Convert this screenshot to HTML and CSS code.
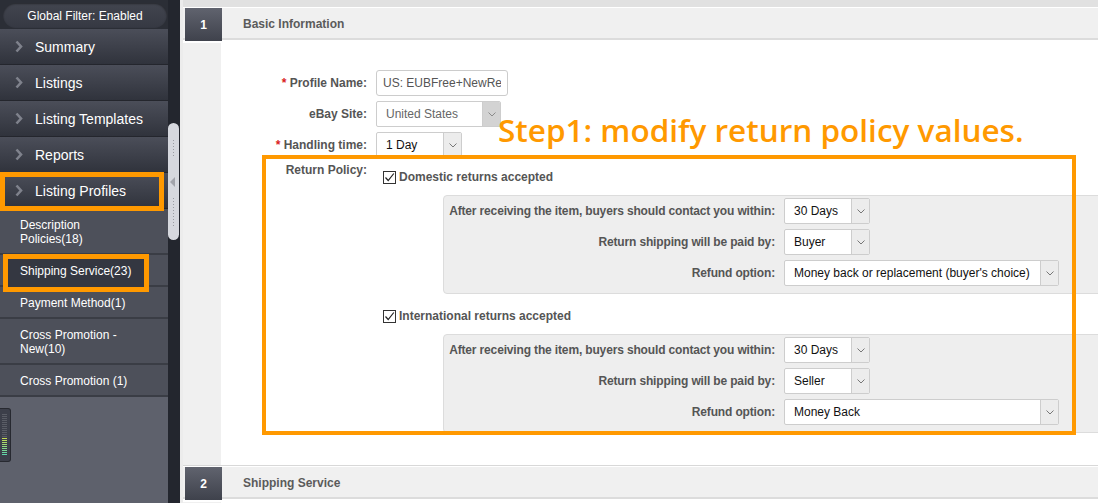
FILE: index.html
```html
<!DOCTYPE html>
<html lang="en">
<head>
<meta charset="utf-8">
<title>Listing Profiles</title>
<link rel="stylesheet" href="styles.css">
</head>
<body>
<aside class="sidebar">
  <div class="filter"><span class="pill">Global Filter: Enabled</span></div>
  <nav class="menu">
    <a class="menu-item"><svg class="chev" width="8" height="13" viewBox="0 0 8 13"><path d="M1.5 1.5 L6 6.5 L1.5 11.5" fill="none" stroke="#7f828c" stroke-width="2.6"/></svg>Summary</a>
    <a class="menu-item"><svg class="chev" width="8" height="13" viewBox="0 0 8 13"><path d="M1.5 1.5 L6 6.5 L1.5 11.5" fill="none" stroke="#7f828c" stroke-width="2.6"/></svg>Listings</a>
    <a class="menu-item"><svg class="chev" width="8" height="13" viewBox="0 0 8 13"><path d="M1.5 1.5 L6 6.5 L1.5 11.5" fill="none" stroke="#7f828c" stroke-width="2.6"/></svg>Listing Templates</a>
    <a class="menu-item"><svg class="chev" width="8" height="13" viewBox="0 0 8 13"><path d="M1.5 1.5 L6 6.5 L1.5 11.5" fill="none" stroke="#7f828c" stroke-width="2.6"/></svg>Reports</a>
    <a class="menu-item is-marked"><svg class="chev" width="8" height="13" viewBox="0 0 8 13"><path d="M1.5 1.5 L6 6.5 L1.5 11.5" fill="none" stroke="#7f828c" stroke-width="2.6"/></svg>Listing Profiles</a>
  </nav>
  <ul class="submenu">
    <li class="sub-item">Description Policies(18)</li>
    <li class="sub-item is-current"><span class="sub-text">Shipping Service(23)</span></li>
    <li class="sub-item">Payment Method(1)</li>
    <li class="sub-item">Cross Promotion - New(10)</li>
    <li class="sub-item">Cross Promotion (1)</li>
  </ul>
  <div class="side-grip"><span class="grip-bars"></span></div>
</aside>

<div class="splitter">
  <div class="splitter-handle">
    <span class="dots"></span>
    <span class="tri"></span>
    <span class="dots dots-long"></span>
  </div>
</div>

<main class="main">
  <div class="topbar"></div>

  <section class="step">
    <header class="step-head"><span class="step-num">1</span><h2 class="step-title">Basic Information</h2></header>
    <div class="step-body">
      <div class="step-gutter"></div>
      <div class="step-content">
        <div class="form">
          <label class="form-label"><span class="req">*</span> Profile Name:</label>
          <div class="field"><input class="text-input" type="text" value="US: EUBFree+NewReturnPolicy"></div>

          <label class="form-label">eBay Site:</label>
          <div class="field"><div class="select is-disabled w125"><span class="select-value">United States</span><span class="select-arrow"><svg width="8" height="5" viewBox="0 0 8 5"><path d="M0.5 0.5 L4 4 L7.5 0.5" fill="none" stroke="#8a8a8a" stroke-width="1"/></svg></span></div></div>

          <label class="form-label"><span class="req">*</span> Handling time:</label>
          <div class="field"><div class="select w86"><span class="select-value">1 Day</span><span class="select-arrow"><svg width="8" height="5" viewBox="0 0 8 5"><path d="M0.5 0.5 L4 4 L7.5 0.5" fill="none" stroke="#777" stroke-width="1"/></svg></span></div></div>

          <label class="form-label label-top">Return Policy:</label>
          <div class="policy">
            <div class="check"><span class="checkbox"><svg width="11" height="11" viewBox="0 0 11 11"><path d="M1.5 5.5 L4.2 8.5 L9.8 1.5" fill="none" stroke="#222" stroke-width="1.2"/></svg></span>Domestic returns accepted</div>
            <div class="policy-box">
              <span class="box-label">After receiving the item, buyers should contact you within:</span>
              <div class="select w86"><span class="select-value">30 Days</span><span class="select-arrow"><svg width="8" height="5" viewBox="0 0 8 5"><path d="M0.5 0.5 L4 4 L7.5 0.5" fill="none" stroke="#777" stroke-width="1"/></svg></span></div>
              <span class="box-label">Return shipping will be paid by:</span>
              <div class="select w86"><span class="select-value">Buyer</span><span class="select-arrow"><svg width="8" height="5" viewBox="0 0 8 5"><path d="M0.5 0.5 L4 4 L7.5 0.5" fill="none" stroke="#777" stroke-width="1"/></svg></span></div>
              <span class="box-label">Refund option:</span>
              <div class="select w275"><span class="select-value">Money back or replacement (buyer's choice)</span><span class="select-arrow"><svg width="8" height="5" viewBox="0 0 8 5"><path d="M0.5 0.5 L4 4 L7.5 0.5" fill="none" stroke="#777" stroke-width="1"/></svg></span></div>
            </div>

            <div class="check check-intl"><span class="checkbox"><svg width="11" height="11" viewBox="0 0 11 11"><path d="M1.5 5.5 L4.2 8.5 L9.8 1.5" fill="none" stroke="#222" stroke-width="1.2"/></svg></span>International returns accepted</div>
            <div class="policy-box policy-box-intl">
              <span class="box-label">After receiving the item, buyers should contact you within:</span>
              <div class="select w86"><span class="select-value">30 Days</span><span class="select-arrow"><svg width="8" height="5" viewBox="0 0 8 5"><path d="M0.5 0.5 L4 4 L7.5 0.5" fill="none" stroke="#777" stroke-width="1"/></svg></span></div>
              <span class="box-label">Return shipping will be paid by:</span>
              <div class="select w86"><span class="select-value">Seller</span><span class="select-arrow"><svg width="8" height="5" viewBox="0 0 8 5"><path d="M0.5 0.5 L4 4 L7.5 0.5" fill="none" stroke="#777" stroke-width="1"/></svg></span></div>
              <span class="box-label">Refund option:</span>
              <div class="select w275"><span class="select-value">Money Back</span><span class="select-arrow"><svg width="8" height="5" viewBox="0 0 8 5"><path d="M0.5 0.5 L4 4 L7.5 0.5" fill="none" stroke="#777" stroke-width="1"/></svg></span></div>
            </div>
          </div>
        </div>
      </div>
    </div>
  </section>

  <section class="step">
    <header class="step-head"><span class="step-num">2</span><h2 class="step-title">Shipping Service</h2></header>
    <div class="step-body step-body-collapsed">
      <div class="step-gutter"></div>
    </div>
  </section>

  <div class="callout-frame"></div>
  <p class="callout-text">Step1: modify return policy values.</p>
</main>
</body>
</html>
```

FILE: styles.css
```css
*, *::before, *::after { box-sizing: border-box; }
html, body { margin: 0; height: 100%; overflow: hidden; }
body {
  display: flex;
  font-family: "Liberation Sans", Arial, sans-serif;
  font-size: 12px;
  background: #fff;
}

/* ---------- sidebar ---------- */
.sidebar {
  width: 168px;
  flex: none;
  display: flex;
  flex-direction: column;
  background: #5e616c;
}
.filter {
  height: 29px;
  padding: 3px 1px 1px 3px;
  background: #2b2e36;
}
.pill {
  display: flex;
  align-items: center;
  justify-content: center;
  height: 25px;
  border-radius: 13px;
  background: linear-gradient(#42454f, #363943);
  box-shadow: inset 0 1px 2px rgba(0,0,0,.45);
  color: #fff;
  font-size: 12px;
}
.menu { display: flex; flex-direction: column; }
.menu-item {
  position: relative;
  display: flex;
  align-items: center;
  gap: 12px;
  height: 36px;
  padding-left: 15px;
  color: #fff;
  font-size: 14px;
  background: linear-gradient(#4b4e59, #30333c);
  border-bottom: 1px solid #24262d;
}
.chev { flex: none; }
.menu-item.is-marked::after {
  content: "";
  position: absolute;
  z-index: 3;
  left: 0;
  top: -1px;
  width: 164px;
  height: 39px;
  border: 5px solid #ff9900;
}
.submenu { list-style: none; margin: 0; padding: 0; }
.sub-item {
  position: relative;
  padding: 9px 23px 7px 20px;
  line-height: 14px;
  color: #fff;
  font-size: 12px;
  background: #4d505a;
  border-bottom: 2px solid #3a3d45;
}
.sub-item.is-current::before {
  content: "";
  position: absolute;
  z-index: 1;
  left: 3px;
  top: -1px;
  width: 146px;
  height: 38px;
  border: 5px solid #ff9900;
  background: #343741;
}
.sub-text { position: relative; z-index: 2; }
.side-grip {
  margin-top: 11px;
  width: 11px;
  height: 54px;
  padding: 5px 0 0 2px;
  background: #3c3f4a;
  border: 1px solid #272930;
  border-left: none;
  border-radius: 0 3px 3px 0;
}
.grip-bars {
  display: block;
  width: 5px;
  height: 42px;
  background:
    repeating-linear-gradient(#5a5d66 0 1px, transparent 1px 2px) top / 5px 24px no-repeat,
    repeating-linear-gradient(rgba(255,255,255,0) 0 1px, #3c3f4a 1px 2px) bottom / 5px 18px no-repeat,
    linear-gradient(#c8dc50, #55d6b4) bottom / 5px 18px no-repeat;
}

/* ---------- splitter ---------- */
.splitter {
  width: 12px;
  flex: none;
  display: flex;
  flex-direction: column;
  background: #23262e;
}
.splitter-handle {
  margin-top: 123px;
  width: 11px;
  height: 117px;
  display: flex;
  flex-direction: column;
  align-items: center;
  padding-top: 16px;
  background: #d6d8de;
  border-radius: 6px;
}
.dots {
  width: 4px;
  height: 19px;
  background-image: radial-gradient(circle, #9a9ca3 0.8px, transparent 1px);
  background-size: 3px 3px;
}
.dots-long { height: 30px; margin-top: 10px; }
.tri {
  margin-top: 19px;
  margin-left: -3px;
  width: 0;
  height: 0;
  border-top: 5px solid transparent;
  border-bottom: 5px solid transparent;
  border-right: 5px solid #a2a4ab;
}

/* ---------- main ---------- */
.main {
  flex: 1;
  position: relative;
  overflow: hidden;
  border-left: 3px solid #ececec;
}
.topbar { height: 7px; background: #e1e1e1; margin-left: -3px; }
.step-head {
  display: flex;
  align-items: center;
  height: 33px;
  background: #f0f0f0;
  border-top: 1px solid #fff;
  border-bottom: 2px solid #dcdcdc;
}
.step-num {
  align-self: flex-start;
  width: 37px;
  height: 33px;
  margin-left: 2px;
  margin-bottom: -3px;
  display: flex;
  align-items: center;
  justify-content: center;
  color: #fff;
  font-weight: bold;
  font-size: 12px;
  background: linear-gradient(#60636e, #3f424c);
}
.step-title {
  margin: 2px 0 0 21px;
  font-size: 12px;
  font-weight: bold;
  color: #5b5b5b;
}
.step-body {
  display: flex;
  border-bottom: 1px solid #d8d8d8;
}
.step-gutter {
  width: 38px;
  flex: none;
  margin-top: 3px;
  background: #f0f0f0;
}
.step-body-collapsed { height: 10px; border-bottom: none; }
.step-content {
  flex: 1;
  min-width: 0;
  padding: 30px 0 32px 0;
}

/* ---------- form ---------- */
.form {
  display: grid;
  grid-template-columns: 146px 1fr;
  column-gap: 9px;
  row-gap: 5px;
  align-items: center;
}
.form-label {
  text-align: right;
  font-weight: bold;
  color: #555;
  white-space: nowrap;
}
.label-top { align-self: start; line-height: 14px; }
.req { color: #d9221c; }
.field { display: flex; }
.text-input {
  width: 132px;
  height: 26px;
  padding: 0 6px;
  border: 1px solid #ccc;
  border-radius: 3px;
  font: 12px "Liberation Sans", Arial, sans-serif;
  color: #555;
  background: #fff;
  outline: none;
}
.select {
  display: flex;
  height: 26px;
  border: 1px solid #cdcdcd;
  border-radius: 2px;
  background: #fff;
  overflow: hidden;
}
.select-value {
  flex: 1;
  display: flex;
  align-items: center;
  padding-left: 9px;
  color: #111;
  white-space: nowrap;
  overflow: hidden;
}
.select-arrow {
  width: 18px;
  flex: none;
  display: flex;
  align-items: center;
  justify-content: center;
  background: #ececec;
  border-left: 1px solid #cdcdcd;
}
.select.is-disabled .select-value { color: #666; }
.select.is-disabled .select-arrow { background: #d3d3d3; }
.w86 { width: 86px; }
.w125 { width: 125px; }
.w275 { width: 275px; }

.policy { display: flex; flex-direction: column; }
.check {
  display: flex;
  align-items: center;
  gap: 3px;
  margin: 6px 0 0 7px;
  height: 16px;
  font-weight: bold;
  color: #555;
}
.checkbox {
  width: 13px;
  height: 13px;
  flex: none;
  display: flex;
  align-items: center;
  justify-content: center;
  border: 1px solid #333;
  background: #fff;
}
.check-intl { margin-top: 14px; }
.policy-box {
  display: grid;
  grid-template-columns: 327px auto;
  justify-content: start;
  column-gap: 9px;
  row-gap: 5px;
  align-items: center;
  margin: 10px -40px 0 67px;
  padding: 2px 0 7px 4px;
  background: #eeeeee;
  border: 1px solid #dcdcdc;
  border-radius: 4px;
}
.policy-box-intl { margin-top: 10px; }
.box-label {
  text-align: right;
  white-space: nowrap;
  font-weight: bold;
  color: #555;
  letter-spacing: -0.15px;
}

/* ---------- annotation ---------- */
.callout-frame {
  position: absolute;
  left: 79px;
  top: 155px;
  width: 814px;
  height: 280px;
  border: 4px solid #ff9900;
}
.callout-text {
  position: absolute;
  left: 315px;
  top: 110px;
  margin: 0;
  font-family: "Open Sans", sans-serif;
  font-weight: 600;
  font-size: 31.5px;
  line-height: 40px;
  color: #ff9900;
  white-space: nowrap;
}
```
